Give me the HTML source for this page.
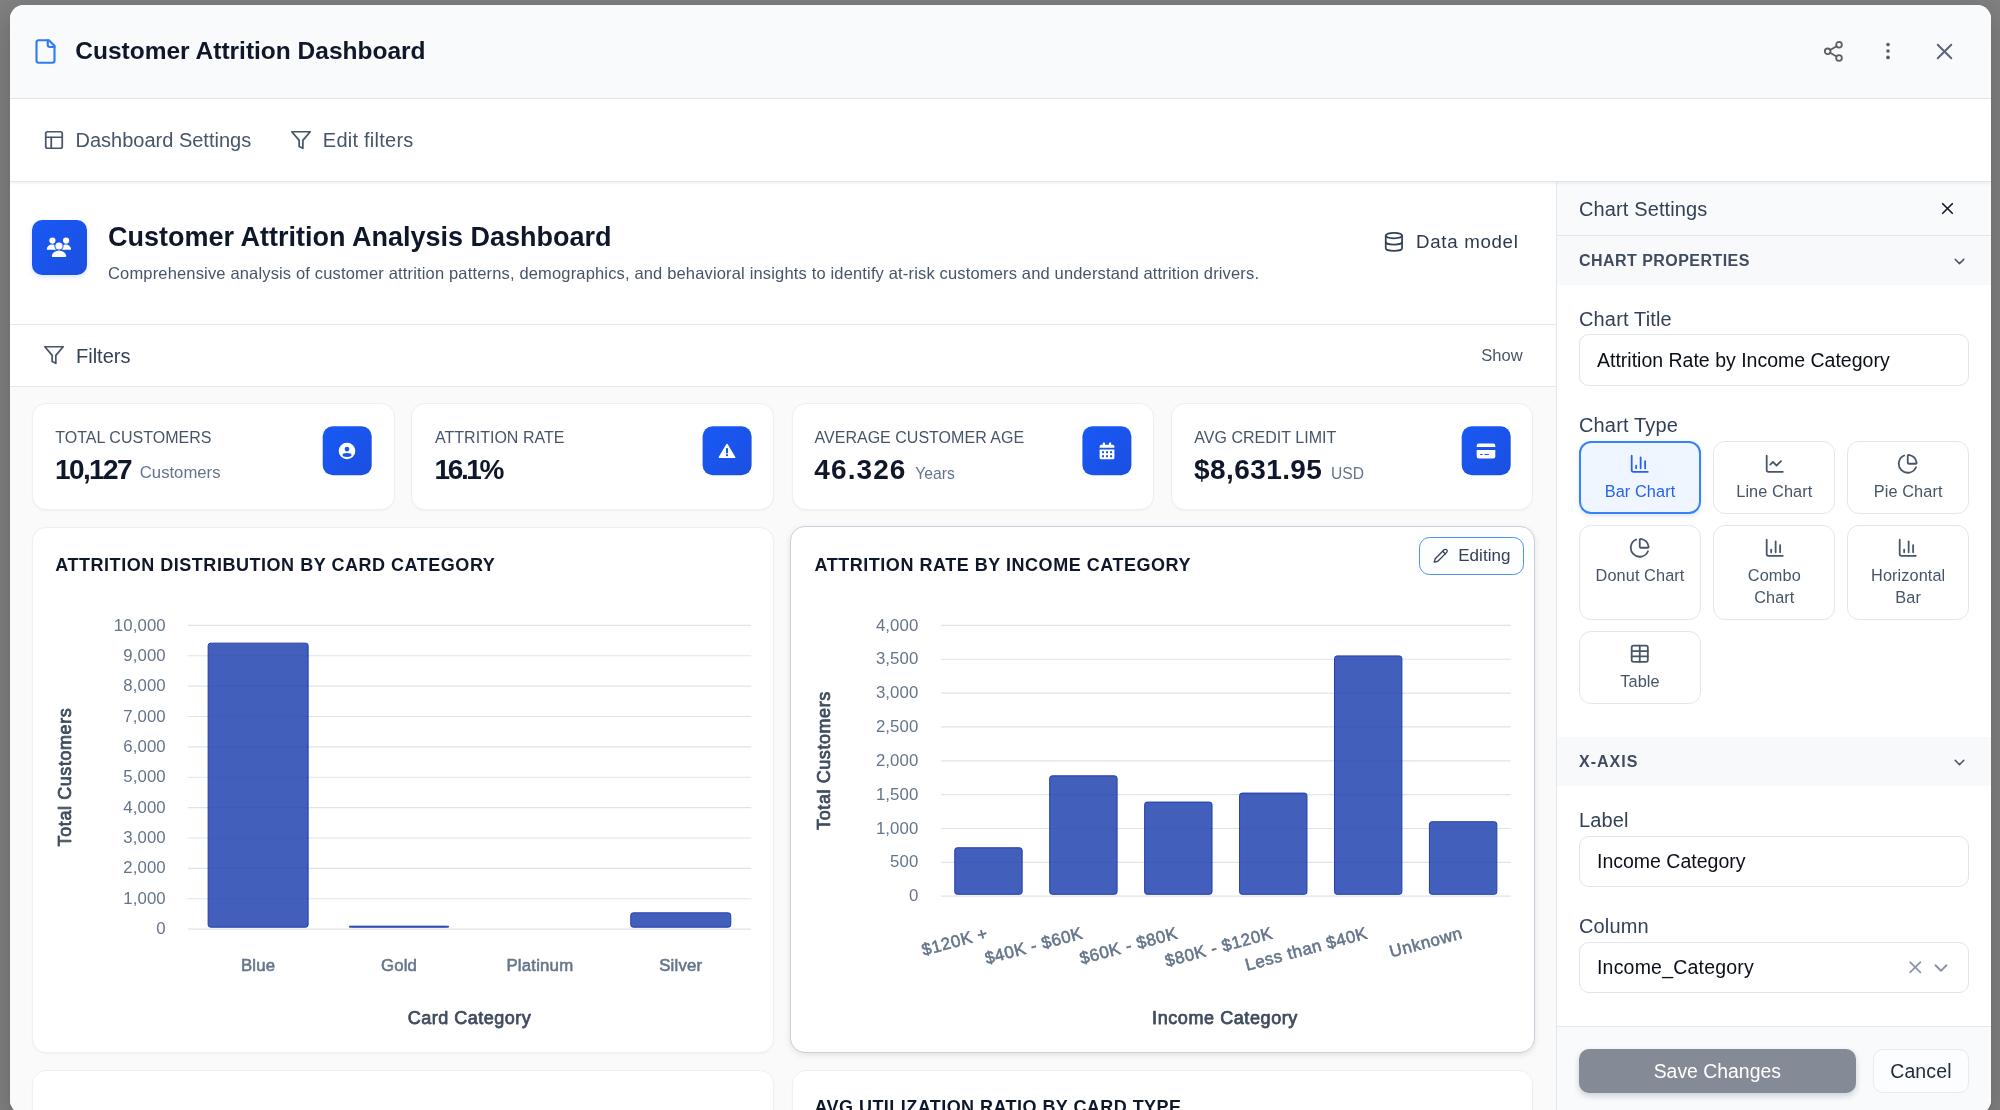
<!DOCTYPE html>
<html lang="en"><head><meta charset="utf-8"><title>Customer Attrition Dashboard</title>
<style>
html,body{margin:0;padding:0;}
body{width:2000px;height:1110px;overflow:hidden;background:#808080;font-family:"Liberation Sans", sans-serif;position:relative;}
.b{position:absolute;box-sizing:border-box;}
.t{position:absolute;white-space:nowrap;line-height:1;}
#modal{position:absolute;left:10px;top:5px;width:1981px;height:1109px;border-radius:14px;background:#fff;overflow:hidden;box-shadow:0 8px 28px rgba(0,0,0,0.22);}
#root{position:absolute;left:-10px;top:-5px;width:2000px;height:1120px;will-change:transform;}
.tile{position:absolute;border-radius:10px;background:linear-gradient(135deg,#1859f5 0%,#1c4fe0 100%);}
.card{position:absolute;box-sizing:border-box;background:#fff;border:1px solid #eeeff4;border-radius:14px;box-shadow:0 1px 2px rgba(15,23,42,0.04);}
</style></head><body>
<div id="modal"><div id="root">

<div class="b" style="left:10px;top:5px;width:1981px;height:94px;background:#f9fafb;border-bottom:1px solid #e5e7eb;"></div>
<svg class="b" style="left:31.90px;top:37.60px;" width="27" height="27" viewBox="0 0 24 24" fill="none" stroke="#2f7bf6" stroke-width="1.9" stroke-linecap="round" stroke-linejoin="round"><path d="M15 2H6a2 2 0 0 0-2 2v16a2 2 0 0 0 2 2h12a2 2 0 0 0 2-2V7Z"/><path d="M14 2v4a2 2 0 0 0 2 2h4"/></svg>
<div class="t" style="left:75.30px;top:39.06px;font-size:24.5px;font-weight:700;color:#0f172a;">Customer Attrition Dashboard</div>
<svg class="b" style="left:1821.75px;top:39.75px;" width="22.7" height="22.7" viewBox="0 0 24 24" fill="none" stroke="#5e5e5e" stroke-width="1.9" stroke-linecap="round" stroke-linejoin="round"><circle cx="18" cy="5" r="3"/><circle cx="6" cy="12" r="3"/><circle cx="18" cy="19" r="3"/><line x1="8.59" x2="15.42" y1="13.51" y2="17.49"/><line x1="15.41" x2="8.59" y1="6.51" y2="10.49"/></svg>
<svg class="b" style="left:1876.60px;top:40.20px;" width="22" height="22" viewBox="0 0 24 24" fill="none" stroke="#5e5e5e" stroke-width="0" stroke-linecap="round" stroke-linejoin="round"><g fill="#5e5e5e" stroke="none"><circle cx="12" cy="5" r="2"/><circle cx="12" cy="12" r="2"/><circle cx="12" cy="19" r="2"/></g></svg>
<svg class="b" style="left:1931.30px;top:37.60px;" width="27" height="27" viewBox="0 0 24 24" fill="none" stroke="#5a6478" stroke-width="1.8" stroke-linecap="round" stroke-linejoin="round"><path d="M18 6 6 18"/><path d="m6 6 12 12"/></svg>
<div class="b" style="left:10px;top:99px;width:1981px;height:83px;background:#fff;border-bottom:1px solid #e3e6eb;box-shadow:0 1px 3px rgba(15,23,42,0.08);z-index:3;"></div>
<div class="b" style="z-index:4;left:0;top:0">
<svg class="b" style="left:42.80px;top:128.60px;" width="22" height="22" viewBox="0 0 24 24" fill="none" stroke="#475569" stroke-width="1.9" stroke-linecap="round" stroke-linejoin="round"><rect width="18" height="18" x="3" y="3" rx="2"/><path d="M3 9h18"/><path d="M9 21V9"/></svg>
<div class="t" style="left:75.50px;top:129.77px;font-size:20px;font-weight:400;color:#475569;">Dashboard Settings</div>
<svg class="b" style="left:289.60px;top:129.00px;" width="22" height="22" viewBox="0 0 24 24" fill="none" stroke="#475569" stroke-width="1.9" stroke-linecap="round" stroke-linejoin="round"><polygon points="22 3 2 3 10 12.46 10 19 14 21 14 12.46 22 3"/></svg>
<div class="t" style="left:322.80px;top:129.77px;font-size:20px;font-weight:400;color:#475569;letter-spacing:0.25px;">Edit filters</div>
</div>
<div class="b" style="left:10px;top:182px;width:1546px;height:940px;background:#fafafa;"></div>
<div class="b" style="left:10px;top:182px;width:1546px;height:143px;background:#fff;border-bottom:1px solid #e5e7eb;"></div>
<div class="tile" style="left:32px;top:220px;width:54.6px;height:54.6px;box-shadow:0 2px 5px rgba(37,99,235,0.18);"></div>
<svg class="b" style="left:45px;top:235px" width="28" height="24" viewBox="-14 -12 28 24">
<g fill="#fff"><circle cx="-6.6" cy="-6.4" r="3.1"/><circle cx="7.1" cy="-6.4" r="3.1"/>
<path d="M-12.2 2.2 a5.2 4.6 0 0 1 10.4 0 a0.6 0.6 0 0 1 -0.6 0.6 h-9.2 a0.6 0.6 0 0 1 -0.6 -0.6z"/>
<path d="M1.6 2.2 a5.2 4.6 0 0 1 10.4 0 a0.6 0.6 0 0 1 -0.6 0.6 h-9.2 a0.6 0.6 0 0 1 -0.6 -0.6z"/></g>
<circle cx="0" cy="-1" r="4.6" fill="#1a55ec"/>
<g fill="#fff"><circle cx="0" cy="-1" r="3.6"/>
<path d="M-7.2 9.2 a7.2 5.6 0 0 1 14.4 0 a0.8 0.8 0 0 1 -0.8 0.8 h-12.8 a0.8 0.8 0 0 1 -0.8 -0.8z"/></g></svg>
<div class="t" style="left:108.00px;top:224.14px;font-size:27px;font-weight:700;color:#0f172a;">Customer Attrition Analysis Dashboard</div>
<div class="t" style="left:108.00px;top:264.53px;font-size:16.5px;font-weight:400;color:#475569;letter-spacing:0.16px;">Comprehensive analysis of customer attrition patterns, demographics, and behavioral insights to identify at-risk customers and understand attrition drivers.</div>
<svg class="b" style="left:1382.50px;top:231.10px;" width="21.8" height="21.8" viewBox="0 0 24 24" fill="none" stroke="#334155" stroke-width="1.9" stroke-linecap="round" stroke-linejoin="round"><ellipse cx="12" cy="5" rx="9" ry="3"/><path d="M3 5V19A9 3 0 0 0 21 19V5"/><path d="M3 12A9 3 0 0 0 21 12"/></svg>
<div class="t" style="left:1416.00px;top:232.67px;font-size:18.7px;font-weight:400;color:#2d3a4e;letter-spacing:0.7px;">Data model</div>
<div class="b" style="left:10px;top:325px;width:1546px;height:62px;background:#fff;border-bottom:1px solid #e5e7eb;"></div>
<svg class="b" style="left:42.80px;top:344.40px;" width="22" height="22" viewBox="0 0 24 24" fill="none" stroke="#475569" stroke-width="1.9" stroke-linecap="round" stroke-linejoin="round"><polygon points="22 3 2 3 10 12.46 10 19 14 21 14 12.46 22 3"/></svg>
<div class="t" style="left:76.00px;top:346.07px;font-size:20px;font-weight:400;color:#334155;">Filters</div>
<div class="t" style="left:1481.30px;top:346.73px;font-size:16.5px;font-weight:400;color:#475569;">Show</div>
<div class="card" style="left:32px;top:403px;width:363px;height:107px;"></div>
<div class="t" style="left:55.30px;top:430.06px;font-size:16px;font-weight:400;color:#475569;letter-spacing:0.02px;">TOTAL CUSTOMERS</div>
<div class="tile" style="left:322px;top:426px;width:49px;height:49px;transform:translate(0.70px,0.25px);"></div>
<div class="card" style="left:411px;top:403px;width:363px;height:107px;"></div>
<div class="t" style="left:435.00px;top:430.06px;font-size:16px;font-weight:400;color:#475569;letter-spacing:0.02px;">ATTRITION RATE</div>
<div class="tile" style="left:702px;top:426px;width:49px;height:49px;transform:translate(0.60px,0.25px);"></div>
<div class="card" style="left:792px;top:403px;width:362px;height:107px;"></div>
<div class="t" style="left:814.50px;top:430.06px;font-size:16px;font-weight:400;color:#475569;letter-spacing:0.02px;">AVERAGE CUSTOMER AGE</div>
<div class="tile" style="left:1082px;top:426px;width:49px;height:49px;transform:translate(0.40px,0.25px);"></div>
<div class="card" style="left:1171px;top:403px;width:362px;height:107px;"></div>
<div class="t" style="left:1194.30px;top:430.06px;font-size:16px;font-weight:400;color:#475569;letter-spacing:0.02px;">AVG CREDIT LIMIT</div>
<div class="tile" style="left:1461px;top:426px;width:49px;height:49px;transform:translate(0.70px,0.25px);"></div>
<div class="t" style="left:55.00px;top:455.70px;font-size:28px;font-weight:700;color:#0f172a;letter-spacing:-1.6px;">10,127</div>
<div class="t" style="left:139.80px;top:465.26px;font-size:16.7px;font-weight:400;color:#64748b;">Customers</div>
<div class="t" style="left:434.60px;top:455.70px;font-size:28px;font-weight:700;color:#0f172a;letter-spacing:-2.4px;">16.1%</div>
<div class="t" style="left:814.30px;top:455.70px;font-size:28px;font-weight:700;color:#0f172a;letter-spacing:1.1px;">46.326</div>
<div class="t" style="left:915.30px;top:466.11px;font-size:15.7px;font-weight:400;color:#64748b;">Years</div>
<div class="t" style="left:1194.10px;top:455.70px;font-size:28px;font-weight:700;color:#0f172a;letter-spacing:0.4px;">$8,631.95</div>
<div class="t" style="left:1331.00px;top:466.19px;font-size:15.6px;font-weight:400;color:#64748b;">USD</div>
<svg class="b" style="left:337.2px;top:440.7px" width="20" height="20" viewBox="-10 -10 20 20">
<circle r="8.3" fill="#fff"/><circle cx="0" cy="-1.9" r="2.4" fill="#1a55ec"/><ellipse cx="0" cy="4" rx="4.5" ry="1.9" fill="#1a55ec"/></svg>
<svg class="b" style="left:717px;top:441px" width="20" height="20" viewBox="-10 -10 20 20">
<path d="M0 -6.6 L7.7 6.3 H-7.7 Z" fill="#fff" stroke="#fff" stroke-width="1.4" stroke-linejoin="round"/>
<rect x="-1" y="-2.9" width="2" height="5.2" fill="#1a55ec"/><rect x="-1" y="3.3" width="2" height="1.8" fill="#1a55ec"/></svg>
<svg class="b" style="left:1096.6px;top:441px" width="20" height="20" viewBox="-10 -10 20 20">
<g fill="#fff"><rect x="-4.2" y="-8.4" width="2.2" height="3.4" rx="0.8"/><rect x="2" y="-8.4" width="2.2" height="3.4" rx="0.8"/>
<path d="M-7.4 -3.2 v-1.5 a1.6 1.6 0 0 1 1.6 -1.6 h11.6 a1.6 1.6 0 0 1 1.6 1.6 v1.5z"/>
<path d="M-7.4 -1.6 h14.8 v8.3 a1.6 1.6 0 0 1 -1.6 1.6 h-11.6 a1.6 1.6 0 0 1 -1.6 -1.6z"/></g>
<g fill="#1a55ec"><rect x="-5" y="0.2" width="2" height="2"/><rect x="-1" y="0.2" width="2" height="2"/><rect x="3.1" y="0.2" width="2" height="2"/>
<rect x="-5" y="4.2" width="2" height="2"/><rect x="-1" y="4.2" width="2" height="2"/><rect x="3.1" y="4.2" width="2" height="2"/></g></svg>
<svg class="b" style="left:1475px;top:440.8px" width="22" height="20" viewBox="-11 -10 22 20">
<g fill="#fff"><path d="M-9.3 -4 v-1.4 a2 2 0 0 1 2 -2 h14.6 a2 2 0 0 1 2 2 v1.4z"/>
<path d="M-9.3 -1 h18.6 v6.4 a2 2 0 0 1 -2 2 h-14.6 a2 2 0 0 1 -2 -2z"/></g>
<g fill="#1a55ec"><rect x="-6" y="3" width="2.8" height="1.1" rx="0.5"/><rect x="-1.6" y="3" width="4.6" height="1.1" rx="0.5"/></g></svg>
<div class="card" style="left:32px;top:527px;width:742px;height:526px;"></div>
<div class="card" style="left:790px;top:526px;width:745px;height:527px;border:1px solid #c9cfdb;border-radius:15px;box-shadow:0 2px 6px rgba(15,23,42,0.10);"></div>
<div class="card" style="left:32px;top:1070px;width:742px;height:120px;"></div>
<div class="card" style="left:792px;top:1070px;width:741px;height:120px;"></div>
<div class="t" style="left:55.30px;top:555.86px;font-size:18px;font-weight:700;color:#0f172a;letter-spacing:0.53px;">ATTRITION DISTRIBUTION BY CARD CATEGORY</div>
<div class="t" style="left:814.50px;top:555.86px;font-size:18px;font-weight:700;color:#0f172a;letter-spacing:0.53px;">ATTRITION RATE BY INCOME CATEGORY</div>
<div class="t" style="left:814.50px;top:1098.06px;font-size:18px;font-weight:700;color:#0f172a;letter-spacing:0.45px;">AVG UTILIZATION RATIO BY CARD TYPE</div>
<div class="b" style="left:1419.3px;top:536.8px;width:104.7px;height:38px;border:1.7px solid #4d92f8;border-radius:10.5px;background:#fdfeff;"></div>
<svg class="b" style="left:1433.25px;top:547.75px;" width="15.5" height="15.5" viewBox="0 0 24 24" fill="none" stroke="#334155" stroke-width="2" stroke-linecap="round" stroke-linejoin="round"><path d="M21.174 6.812a1 1 0 0 0-3.986-3.987L3.842 16.174a2 2 0 0 0-.5.83l-1.321 4.352a.5.5 0 0 0 .623.622l4.353-1.32a2 2 0 0 0 .83-.497z"/><path d="m15 5 4 4"/></svg>
<div class="t" style="left:1458.20px;top:546.81px;font-size:17px;font-weight:400;color:#334155;letter-spacing:0.05px;">Editing</div>
<svg class="b" style="left:0;top:500px" width="1560" height="560" viewBox="0 500 1560 560" font-family='"Liberation Sans", sans-serif'>
<line x1="187.7" x2="751.2" y1="929.10" y2="929.10" stroke="#dfe3ec" stroke-width="1.2"/>
<text x="165.8" y="934.20" text-anchor="end" font-size="16.8" letter-spacing="0.1" fill="#64748b">0</text>
<line x1="187.7" x2="751.2" y1="898.73" y2="898.73" stroke="#dfe3ec" stroke-width="1.2"/>
<text x="165.8" y="903.83" text-anchor="end" font-size="16.8" letter-spacing="0.1" fill="#64748b">1,000</text>
<line x1="187.7" x2="751.2" y1="868.36" y2="868.36" stroke="#dfe3ec" stroke-width="1.2"/>
<text x="165.8" y="873.46" text-anchor="end" font-size="16.8" letter-spacing="0.1" fill="#64748b">2,000</text>
<line x1="187.7" x2="751.2" y1="837.99" y2="837.99" stroke="#dfe3ec" stroke-width="1.2"/>
<text x="165.8" y="843.09" text-anchor="end" font-size="16.8" letter-spacing="0.1" fill="#64748b">3,000</text>
<line x1="187.7" x2="751.2" y1="807.62" y2="807.62" stroke="#dfe3ec" stroke-width="1.2"/>
<text x="165.8" y="812.72" text-anchor="end" font-size="16.8" letter-spacing="0.1" fill="#64748b">4,000</text>
<line x1="187.7" x2="751.2" y1="777.25" y2="777.25" stroke="#dfe3ec" stroke-width="1.2"/>
<text x="165.8" y="782.35" text-anchor="end" font-size="16.8" letter-spacing="0.1" fill="#64748b">5,000</text>
<line x1="187.7" x2="751.2" y1="746.88" y2="746.88" stroke="#dfe3ec" stroke-width="1.2"/>
<text x="165.8" y="751.98" text-anchor="end" font-size="16.8" letter-spacing="0.1" fill="#64748b">6,000</text>
<line x1="187.7" x2="751.2" y1="716.51" y2="716.51" stroke="#dfe3ec" stroke-width="1.2"/>
<text x="165.8" y="721.61" text-anchor="end" font-size="16.8" letter-spacing="0.1" fill="#64748b">7,000</text>
<line x1="187.7" x2="751.2" y1="686.14" y2="686.14" stroke="#dfe3ec" stroke-width="1.2"/>
<text x="165.8" y="691.24" text-anchor="end" font-size="16.8" letter-spacing="0.1" fill="#64748b">8,000</text>
<line x1="187.7" x2="751.2" y1="655.77" y2="655.77" stroke="#dfe3ec" stroke-width="1.2"/>
<text x="165.8" y="660.87" text-anchor="end" font-size="16.8" letter-spacing="0.1" fill="#64748b">9,000</text>
<line x1="187.7" x2="751.2" y1="625.40" y2="625.40" stroke="#dfe3ec" stroke-width="1.2"/>
<text x="165.8" y="630.50" text-anchor="end" font-size="16.8" letter-spacing="0.1" fill="#64748b">10,000</text>
<rect x="208.14" y="643.13" width="100.00" height="284.07" rx="2.5" fill="rgba(30,64,175,0.84)" stroke="#1f3fae" stroke-width="1"/>
<text x="258.14" y="970.6" text-anchor="middle" font-size="16.8" letter-spacing="0.2" fill="#64748b" stroke="#64748b" stroke-width="0.55" paint-order="stroke">Blue</text>
<rect x="349.01" y="926.18" width="100.00" height="1.02" rx="2.5" fill="rgba(30,64,175,0.84)" stroke="#1f3fae" stroke-width="1"/>
<text x="399.01" y="970.6" text-anchor="middle" font-size="16.8" letter-spacing="0.2" fill="#64748b" stroke="#64748b" stroke-width="0.55" paint-order="stroke">Gold</text>
<text x="539.89" y="970.6" text-anchor="middle" font-size="16.8" letter-spacing="0.2" fill="#64748b" stroke="#64748b" stroke-width="0.55" paint-order="stroke">Platinum</text>
<rect x="630.76" y="912.84" width="100.00" height="14.36" rx="2.5" fill="rgba(30,64,175,0.84)" stroke="#1f3fae" stroke-width="1"/>
<text x="680.76" y="970.6" text-anchor="middle" font-size="16.8" letter-spacing="0.2" fill="#64748b" stroke="#64748b" stroke-width="0.55" paint-order="stroke">Silver</text>
<text x="469.5" y="1024.2" text-anchor="middle" font-size="18" letter-spacing="0.5" font-weight="400" fill="#3f4b5e" stroke="#3f4b5e" stroke-width="0.75" paint-order="stroke" stroke-linejoin="round">Card Category</text>
<text transform="translate(70.9,777) rotate(-90)" text-anchor="middle" font-size="18" letter-spacing="0.58" font-weight="400" fill="#3f4b5e" stroke="#3f4b5e" stroke-width="0.75" paint-order="stroke" stroke-linejoin="round">Total Customers</text>
<line x1="941.0" x2="1510.6" y1="896.20" y2="896.20" stroke="#dfe3ec" stroke-width="1.2"/>
<text x="918.4" y="901.30" text-anchor="end" font-size="16.8" letter-spacing="0.1" fill="#64748b">0</text>
<line x1="941.0" x2="1510.6" y1="862.35" y2="862.35" stroke="#dfe3ec" stroke-width="1.2"/>
<text x="918.4" y="867.45" text-anchor="end" font-size="16.8" letter-spacing="0.1" fill="#64748b">500</text>
<line x1="941.0" x2="1510.6" y1="828.50" y2="828.50" stroke="#dfe3ec" stroke-width="1.2"/>
<text x="918.4" y="833.60" text-anchor="end" font-size="16.8" letter-spacing="0.1" fill="#64748b">1,000</text>
<line x1="941.0" x2="1510.6" y1="794.65" y2="794.65" stroke="#dfe3ec" stroke-width="1.2"/>
<text x="918.4" y="799.75" text-anchor="end" font-size="16.8" letter-spacing="0.1" fill="#64748b">1,500</text>
<line x1="941.0" x2="1510.6" y1="760.80" y2="760.80" stroke="#dfe3ec" stroke-width="1.2"/>
<text x="918.4" y="765.90" text-anchor="end" font-size="16.8" letter-spacing="0.1" fill="#64748b">2,000</text>
<line x1="941.0" x2="1510.6" y1="726.95" y2="726.95" stroke="#dfe3ec" stroke-width="1.2"/>
<text x="918.4" y="732.05" text-anchor="end" font-size="16.8" letter-spacing="0.1" fill="#64748b">2,500</text>
<line x1="941.0" x2="1510.6" y1="693.10" y2="693.10" stroke="#dfe3ec" stroke-width="1.2"/>
<text x="918.4" y="698.20" text-anchor="end" font-size="16.8" letter-spacing="0.1" fill="#64748b">3,000</text>
<line x1="941.0" x2="1510.6" y1="659.25" y2="659.25" stroke="#dfe3ec" stroke-width="1.2"/>
<text x="918.4" y="664.35" text-anchor="end" font-size="16.8" letter-spacing="0.1" fill="#64748b">3,500</text>
<line x1="941.0" x2="1510.6" y1="625.40" y2="625.40" stroke="#dfe3ec" stroke-width="1.2"/>
<text x="918.4" y="630.50" text-anchor="end" font-size="16.8" letter-spacing="0.1" fill="#64748b">4,000</text>
<rect x="954.77" y="847.78" width="67.40" height="46.52" rx="2.5" fill="rgba(30,64,175,0.84)" stroke="#1f3fae" stroke-width="1"/>
<text transform="translate(988.87,938.20) rotate(-15)" text-anchor="end" font-size="17" letter-spacing="0.55" fill="#64748b" stroke="#64748b" stroke-width="0.55" paint-order="stroke">$120K +</text>
<rect x="1049.70" y="775.82" width="67.40" height="118.48" rx="2.5" fill="rgba(30,64,175,0.84)" stroke="#1f3fae" stroke-width="1"/>
<text transform="translate(1083.80,938.20) rotate(-15)" text-anchor="end" font-size="17" letter-spacing="0.55" fill="#64748b" stroke="#64748b" stroke-width="0.55" paint-order="stroke">$40K - $60K</text>
<rect x="1144.63" y="802.08" width="67.40" height="92.22" rx="2.5" fill="rgba(30,64,175,0.84)" stroke="#1f3fae" stroke-width="1"/>
<text transform="translate(1178.73,938.20) rotate(-15)" text-anchor="end" font-size="17" letter-spacing="0.55" fill="#64748b" stroke="#64748b" stroke-width="0.55" paint-order="stroke">$60K - $80K</text>
<rect x="1239.57" y="793.08" width="67.40" height="101.22" rx="2.5" fill="rgba(30,64,175,0.84)" stroke="#1f3fae" stroke-width="1"/>
<text transform="translate(1273.67,938.20) rotate(-15)" text-anchor="end" font-size="17" letter-spacing="0.55" fill="#64748b" stroke="#64748b" stroke-width="0.55" paint-order="stroke">$80K - $120K</text>
<rect x="1334.50" y="655.92" width="67.40" height="238.38" rx="2.5" fill="rgba(30,64,175,0.84)" stroke="#1f3fae" stroke-width="1"/>
<text transform="translate(1368.60,938.20) rotate(-15)" text-anchor="end" font-size="17" letter-spacing="0.55" fill="#64748b" stroke="#64748b" stroke-width="0.55" paint-order="stroke">Less than $40K</text>
<rect x="1429.43" y="821.72" width="67.40" height="72.58" rx="2.5" fill="rgba(30,64,175,0.84)" stroke="#1f3fae" stroke-width="1"/>
<text transform="translate(1463.53,938.20) rotate(-15)" text-anchor="end" font-size="17" letter-spacing="0.55" fill="#64748b" stroke="#64748b" stroke-width="0.55" paint-order="stroke">Unknown</text>
<text x="1225" y="1024.2" text-anchor="middle" font-size="18" letter-spacing="0.58" font-weight="400" fill="#3f4b5e" stroke="#3f4b5e" stroke-width="0.75" paint-order="stroke" stroke-linejoin="round">Income Category</text>
<text transform="translate(829.6,760.5) rotate(-90)" text-anchor="middle" font-size="18" letter-spacing="0.58" font-weight="400" fill="#3f4b5e" stroke="#3f4b5e" stroke-width="0.75" paint-order="stroke" stroke-linejoin="round">Total Customers</text>
</svg>
<div class="b" style="left:1556px;top:182px;width:435px;height:940px;background:#fff;border-left:1px solid #e3e6eb;"></div>
<div class="b" style="left:1557px;top:182px;width:434px;height:54px;background:#f9fafb;border-bottom:1px solid #e5e7eb;"></div>
<div class="t" style="left:1579.00px;top:198.57px;font-size:20px;font-weight:400;color:#334155;letter-spacing:0.12px;">Chart Settings</div>
<svg class="b" style="left:1938.00px;top:198.80px;" width="19" height="19" viewBox="0 0 24 24" fill="none" stroke="#111827" stroke-width="2.1" stroke-linecap="round" stroke-linejoin="round"><path d="M18 6 6 18"/><path d="m6 6 12 12"/></svg>
<div class="b" style="left:1557px;top:236px;width:434px;height:49px;background:#f8f9fb;"></div>
<div class="t" style="left:1579.00px;top:252.96px;font-size:16px;font-weight:700;color:#3f4b5e;letter-spacing:0.45px;">CHART PROPERTIES</div>
<svg class="b" style="left:1951.00px;top:252.50px;" width="17" height="17" viewBox="0 0 24 24" fill="none" stroke="#475569" stroke-width="2" stroke-linecap="round" stroke-linejoin="round"><path d="m6 9 6 6 6-6"/></svg>
<div class="t" style="left:1579.00px;top:309.07px;font-size:20px;font-weight:400;color:#334155;letter-spacing:0.15px;">Chart Title</div>
<div class="b" style="left:1579px;top:334.3px;width:389.8px;height:51.7px;border:1px solid #e1e4ea;border-radius:10px;background:#fff;"></div>
<div class="t" style="left:1597.00px;top:350.79px;font-size:19.5px;font-weight:400;color:#0b0f19;">Attrition Rate by Income Category</div>
<div class="t" style="left:1579.00px;top:415.17px;font-size:20px;font-weight:400;color:#334155;letter-spacing:0.15px;">Chart Type</div>
<div class="b" style="left:1579px;top:441.2px;width:122.3px;height:72.5px;border:2px solid #3583f7;border-radius:12px;background:#eff6ff;box-shadow:0 2px 5px rgba(30,64,175,0.13);"></div>
<svg class="b" style="left:1629.25px;top:452.85px;" width="21.5" height="21.5" viewBox="0 0 24 24" fill="none" stroke="#2563eb" stroke-width="2" stroke-linecap="round" stroke-linejoin="round"><path d="M3 3v16a2 2 0 0 0 2 2h16"/><path d="M18 17V9"/><path d="M13 17V5"/><path d="M8 17v-3"/></svg>
<div class="t" style="left:1640.00px;top:482.80px;font-size:16.3px;font-weight:400;color:#2563eb;letter-spacing:0.1px;transform:translateX(-50%);">Bar Chart</div>
<div class="b" style="left:1713.3px;top:441.2px;width:121.8px;height:72.5px;border:1px solid #e3e6ec;border-radius:12px;background:#fff;"></div>
<svg class="b" style="left:1763.55px;top:452.85px;" width="21.5" height="21.5" viewBox="0 0 24 24" fill="none" stroke="#475569" stroke-width="2" stroke-linecap="round" stroke-linejoin="round"><path d="M3 3v16a2 2 0 0 0 2 2h16"/><path d="m19 9-5 5-4-4-3 3"/></svg>
<div class="t" style="left:1774.30px;top:482.80px;font-size:16.3px;font-weight:400;color:#475569;letter-spacing:0.1px;transform:translateX(-50%);">Line Chart</div>
<div class="b" style="left:1847.2px;top:441.2px;width:121.8px;height:72.5px;border:1px solid #e3e6ec;border-radius:12px;background:#fff;"></div>
<svg class="b" style="left:1897.45px;top:452.85px;" width="21.5" height="21.5" viewBox="0 0 24 24" fill="none" stroke="#475569" stroke-width="2" stroke-linecap="round" stroke-linejoin="round"><path d="M21 12c.552 0 1.005-.449.95-.998a10 10 0 0 0-8.953-8.951c-.55-.055-.998.398-.998.95v8a1 1 0 0 0 1 1z"/><path d="M21.21 15.89A10 10 0 1 1 8 2.83"/></svg>
<div class="t" style="left:1908.20px;top:482.80px;font-size:16.3px;font-weight:400;color:#475569;letter-spacing:0.1px;transform:translateX(-50%);">Pie Chart</div>
<div class="b" style="left:1579px;top:525.2px;width:121.8px;height:95px;border:1px solid #e3e6ec;border-radius:12px;background:#fff;"></div>
<svg class="b" style="left:1629.25px;top:536.85px;" width="21.5" height="21.5" viewBox="0 0 24 24" fill="none" stroke="#475569" stroke-width="2" stroke-linecap="round" stroke-linejoin="round"><path d="M21 12c.552 0 1.005-.449.95-.998a10 10 0 0 0-8.953-8.951c-.55-.055-.998.398-.998.95v8a1 1 0 0 0 1 1z"/><path d="M21.21 15.89A10 10 0 1 1 8 2.83"/></svg>
<div class="t" style="left:1640.00px;top:566.80px;font-size:16.3px;font-weight:400;color:#475569;letter-spacing:0.1px;transform:translateX(-50%);">Donut Chart</div>
<div class="b" style="left:1713.3px;top:525.2px;width:121.8px;height:95px;border:1px solid #e3e6ec;border-radius:12px;background:#fff;"></div>
<svg class="b" style="left:1763.55px;top:536.85px;" width="21.5" height="21.5" viewBox="0 0 24 24" fill="none" stroke="#475569" stroke-width="2" stroke-linecap="round" stroke-linejoin="round"><path d="M3 3v16a2 2 0 0 0 2 2h16"/><path d="M18 17V9"/><path d="M13 17V5"/><path d="M8 17v-3"/></svg>
<div class="t" style="left:1774.30px;top:566.80px;font-size:16.3px;font-weight:400;color:#475569;letter-spacing:0.1px;transform:translateX(-50%);">Combo</div>
<div class="t" style="left:1774.30px;top:589.00px;font-size:16.3px;font-weight:400;color:#475569;letter-spacing:0.1px;transform:translateX(-50%);">Chart</div>
<div class="b" style="left:1847.2px;top:525.2px;width:121.8px;height:95px;border:1px solid #e3e6ec;border-radius:12px;background:#fff;"></div>
<svg class="b" style="left:1897.45px;top:536.85px;" width="21.5" height="21.5" viewBox="0 0 24 24" fill="none" stroke="#475569" stroke-width="2" stroke-linecap="round" stroke-linejoin="round"><path d="M3 3v16a2 2 0 0 0 2 2h16"/><path d="M18 17V9"/><path d="M13 17V5"/><path d="M8 17v-3"/></svg>
<div class="t" style="left:1908.20px;top:566.80px;font-size:16.3px;font-weight:400;color:#475569;letter-spacing:0.1px;transform:translateX(-50%);">Horizontal</div>
<div class="t" style="left:1908.20px;top:589.00px;font-size:16.3px;font-weight:400;color:#475569;letter-spacing:0.1px;transform:translateX(-50%);">Bar</div>
<div class="b" style="left:1579px;top:631.2px;width:121.8px;height:73px;border:1px solid #e3e6ec;border-radius:12px;background:#fff;"></div>
<svg class="b" style="left:1629.25px;top:642.85px;" width="21.5" height="21.5" viewBox="0 0 24 24" fill="none" stroke="#475569" stroke-width="2" stroke-linecap="round" stroke-linejoin="round"><path d="M12 3v18"/><rect width="18" height="18" x="3" y="3" rx="2"/><path d="M3 9h18"/><path d="M3 15h18"/></svg>
<div class="t" style="left:1640.00px;top:672.80px;font-size:16.3px;font-weight:400;color:#475569;letter-spacing:0.1px;transform:translateX(-50%);">Table</div>
<div class="b" style="left:1557px;top:737px;width:434px;height:49px;background:#f8f9fb;"></div>
<div class="t" style="left:1579.00px;top:753.76px;font-size:16px;font-weight:700;color:#3f4b5e;letter-spacing:1.0px;">X-AXIS</div>
<svg class="b" style="left:1951.00px;top:753.50px;" width="17" height="17" viewBox="0 0 24 24" fill="none" stroke="#475569" stroke-width="2" stroke-linecap="round" stroke-linejoin="round"><path d="m6 9 6 6 6-6"/></svg>
<div class="t" style="left:1579.00px;top:810.37px;font-size:20px;font-weight:400;color:#334155;letter-spacing:0.15px;">Label</div>
<div class="b" style="left:1579px;top:836px;width:389.8px;height:50.5px;border:1px solid #e1e4ea;border-radius:10px;background:#fff;"></div>
<div class="t" style="left:1597.00px;top:851.89px;font-size:19.5px;font-weight:400;color:#0b0f19;">Income Category</div>
<div class="t" style="left:1579.00px;top:916.47px;font-size:20px;font-weight:400;color:#334155;letter-spacing:0.15px;">Column</div>
<div class="b" style="left:1579px;top:942px;width:389.8px;height:50.5px;border:1px solid #e1e4ea;border-radius:10px;background:#fff;"></div>
<div class="t" style="left:1597.00px;top:957.89px;font-size:19.5px;font-weight:400;color:#0b0f19;letter-spacing:0.2px;">Income_Category</div>
<svg class="b" style="left:1904.65px;top:957.35px;" width="20.5" height="20.5" viewBox="0 0 24 24" fill="none" stroke="#8a91a3" stroke-width="1.9" stroke-linecap="round" stroke-linejoin="round"><path d="M18 6 6 18"/><path d="m6 6 12 12"/></svg>
<svg class="b" style="left:1929.80px;top:956.80px;" width="22" height="22" viewBox="0 0 24 24" fill="none" stroke="#8a91a3" stroke-width="2" stroke-linecap="round" stroke-linejoin="round"><path d="m6 9 6 6 6-6"/></svg>
<div class="b" style="left:1557px;top:1026px;width:434px;height:100px;background:#f8fafc;border-top:1px solid #e2e8f0;"></div>
<div class="b" style="left:1579px;top:1049px;width:276.5px;height:43.5px;background:#858a97;border-radius:10px;box-shadow:0 3px 6px rgba(15,23,42,0.18);"></div>
<div class="t" style="left:1717.30px;top:1061.78px;font-size:19.4px;font-weight:400;color:#ffffff;transform:translateX(-50%);">Save Changes</div>
<div class="b" style="left:1872.5px;top:1049px;width:96.5px;height:43.5px;background:#fcfdfe;border:1px solid #e5eaf3;border-radius:10px;"></div>
<div class="t" style="left:1920.90px;top:1061.69px;font-size:19.5px;font-weight:400;color:#1e293b;letter-spacing:0.12px;transform:translateX(-50%);">Cancel</div>
</div></div></body></html>
